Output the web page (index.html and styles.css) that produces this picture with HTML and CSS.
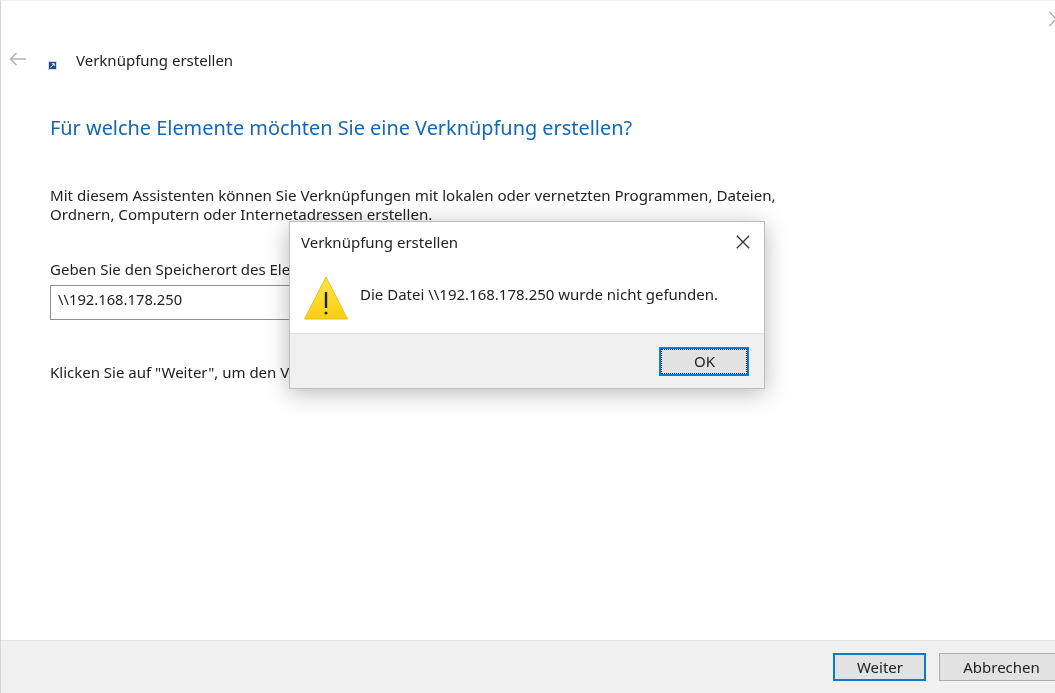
FILE: index.html
```html
<!DOCTYPE html>
<html lang="de">
<head>
<meta charset="utf-8">
<title>Verknüpfung erstellen</title>
<link rel="stylesheet" href="styles.css">
</head>
<body>
<div class="wizard">
  <svg class="win-close" width="6" height="16" viewBox="0 0 6 16"><path d="M0.500 1 L7 8 L0.500 15" stroke="#a8a8a8" stroke-width="1.2" fill="none"/></svg>
  <header class="nav">
    <svg class="back" width="18" height="14" viewBox="0 0 18 14"><path d="M1.5 7 H17 M7.5 1 L1.5 7 L7.5 13" stroke="#b4b4b4" stroke-width="1.6" fill="none"/></svg>
    <svg class="shortcut" width="9" height="9" viewBox="0 0 9 9"><rect width="9" height="9" fill="#d5dbe6"/><rect x="1" y="1" width="7" height="7" fill="#1f4f96"/><path d="M2.500 6.500 L6 3 M3.800 2.700 H6.200 V5" stroke="#fff" stroke-width="1" fill="none"/></svg>
    <span class="nav-title">Verknüpfung erstellen</span>
  </header>
  <main class="content">
    <h1 class="heading">Für welche Elemente möchten Sie eine Verknüpfung erstellen?</h1>
    <p class="intro">Mit diesem Assistenten können Sie Verknüpfungen mit lokalen oder vernetzten Programmen, Dateien, Ordnern, Computern oder Internetadressen erstellen.</p>
    <label class="field-label" for="loc">Geben Sie den Speicherort des Elements ein:</label>
    <input class="field" id="loc" type="text" value="\\192.168.178.250">
    <p class="hint">Klicken Sie auf "Weiter", um den Vorgang fortzusetzen.</p>
  </main>
  <footer class="actions">
    <button class="btn btn-default">Weiter</button>
    <button class="btn">Abbrechen</button>
  </footer>
</div>
<section class="dialog">
  <div class="dialog-title">
    <span>Verknüpfung erstellen</span>
    <svg width="14" height="14" viewBox="0 0 14 14"><path d="M0.800 0.800 L13.200 13.200 M13.200 0.800 L0.800 13.200" stroke="#333" stroke-width="1.300" fill="none"/></svg>
  </div>
  <div class="dialog-body">
    <svg class="warn" width="44" height="44" viewBox="0 0 44 44"><defs><linearGradient id="w" x1="0" y1="0" x2="0" y2="1"><stop offset="0" stop-color="#fde647"/><stop offset="1" stop-color="#fccd12"/></linearGradient></defs><path d="M22 1 L43.500 43 H0.500 Z" fill="url(#w)" stroke="#ebbd1c" stroke-width="1" stroke-linejoin="round"/><path d="M22 16 V32" stroke="#222" stroke-width="2.400"/><circle cx="22" cy="37" r="1.500" fill="#222"/></svg>
    <p class="message">Die Datei \\192.168.178.250 wurde nicht gefunden.</p>
  </div>
  <div class="dialog-foot"><button class="btn-ok">OK</button></div>
</section>
</body>
</html>
```
FILE: styles.css
```css
* { box-sizing: border-box; }
html, body { margin: 0; height: 100%; overflow: hidden; }
body { font-family: "Noto Sans", "Open Sans", sans-serif; color: #222; background: #fff; }
.wizard { position: relative; height: 693px; display: flex; flex-direction: column; border-left: 1px solid #d4d4d4; border-top: 1px solid #f0f0f0; filter: blur(0.5px); }
.win-close { position: absolute; top: 10px; right: 0; }
.nav { height: 79px; padding: 40px 0 0 8px; display: flex; align-items: center; }
.back { margin-top: -4px; }
.shortcut { margin: 9px 0 0 21px; }
.nav-title { margin: -2px 0 0 19px; font-size: 15px; }
.content { flex: 1; padding: 0 0 0 49px; }
.heading { margin: 35px 0 0; font-size: 19.9px; font-weight: 400; color: #1467b4; line-height: 26px; }
.intro { margin: 45px 0 0; width: 740px; font-size: 15.1px; line-height: 19px; }
.field-label { display: block; margin-top: 35px; font-size: 15px; line-height: 20px; }
.field { display: block; margin-top: 6px; width: 700px; height: 35px; padding: 0 7px 8px; font: 14.75px "Noto Sans", sans-serif; color: #222; border: 1px solid #8f8f8f; background: #fff; outline: 0; }
.hint { margin: 42px 0 0; font-size: 15px; line-height: 20px; }
.actions { height: 53px; background: #f0f0f0; border-top: 1px solid #e4e4e4; display: flex; justify-content: flex-end; align-items: center; gap: 13px; margin-right: -8px; }
.btn { width: 93px; height: 28px; background: #e2e2e2; border: 1px solid #adadad; font: 15px "Noto Sans", sans-serif; color: #222; padding: 0 0 0 1px; }
.btn-default { border: 2px solid #0f78d2; }
.actions .btn:last-child { width: 124px; }
.dialog { position: absolute; left: 289px; top: 221px; width: 476px; height: 168px; background: #fff; border: 1px solid #bdbdbd; box-shadow: 0 4px 22px rgba(0,0,0,.28); display: flex; flex-direction: column; filter: blur(0.5px); }
.dialog-title { height: 40px; padding: 0 14px 0 11px; display: flex; justify-content: space-between; align-items: center; font-size: 15px; }
.dialog-body { flex: 1; display: flex; align-items: center; padding: 0 0 0 14px; }
.warn { flex: none; }
.message { margin: 0 0 8px 12px; font-size: 15px; }
.dialog-foot { height: 55px; background: #f0f0f0; border-top: 1px solid #dfdfdf; display: flex; justify-content: flex-end; align-items: center; padding: 0 15px 0 0; }
.btn-ok { width: 90px; height: 29px; background: #e2e2e2; border: 2px solid #0f78d2; outline: 1px dotted #222; outline-offset: -3px; font: 15px "Noto Sans", sans-serif; color: #222; padding: 0 0 0 1px; }
```
